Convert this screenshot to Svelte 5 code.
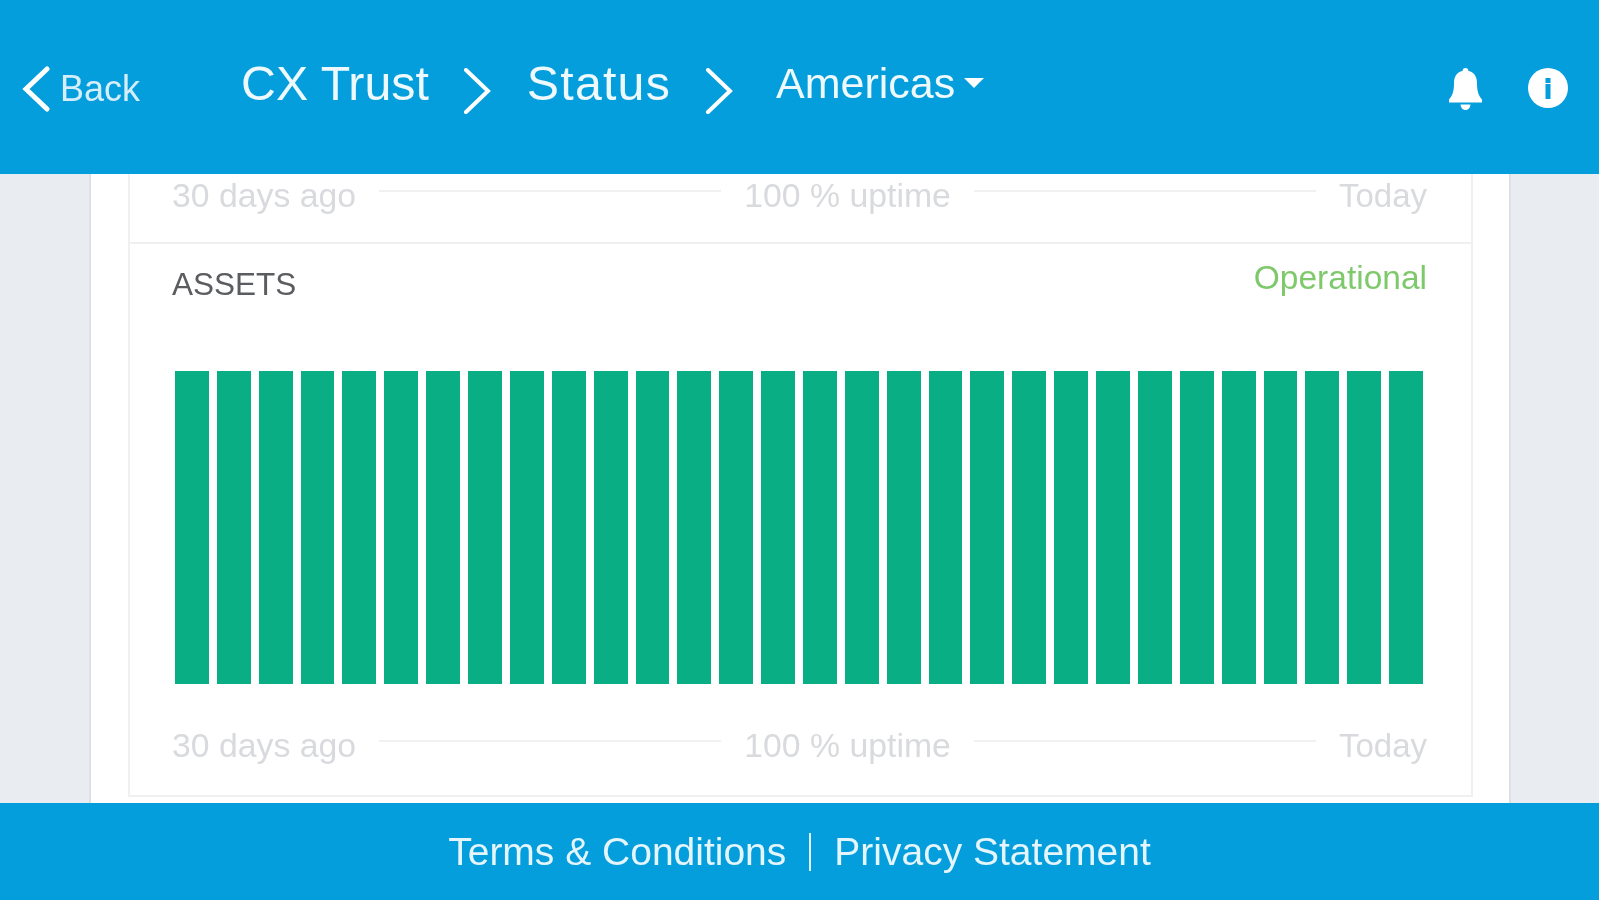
<script>
    const bars = Array.from({ length: 30 }, (_, i) => i)
</script>

<div class="page">
    <header class="top">
        <a class="back">
            <svg class="chev-back" viewBox="0 0 28 46"><path d="M25 3 L4 23 L25 43" /></svg>
            <span>Back</span>
        </a>
        <span class="crumb">CX Trust</span>
        <svg class="chev" viewBox="0 0 28 46"><path d="M3 2 L25 23 L3 44" /></svg>
        <span class="crumb status">Status</span>
        <svg class="chev" viewBox="0 0 28 46"><path d="M3 2 L25 23 L3 44" /></svg>
        <span class="region">Americas</span>
        <span class="caret"></span>
        <div class="icons">
            <svg class="bell" viewBox="0 0 33 42">
                <path d="M16.5 0 C18.4 0 19.4 1.2 19.4 3 C25.6 4.2 28 9 28 15 C28 22 29 27 33 31.5 L33 34.5 L0 34.5 L0 31.5 C4 27 5 22 5 15 C5 9 7.4 4.2 13.6 3 C13.6 1.2 14.6 0 16.5 0 Z" />
                <path d="M11.5 36.5 L21.5 36.5 C21.2 39.8 19.2 42 16.5 42 C13.8 42 11.8 39.8 11.5 36.5 Z" />
            </svg>
            <svg class="info" viewBox="0 0 40 40">
                <circle cx="20" cy="20" r="20" fill="#fff" />
                <rect x="17.5" y="10" width="5" height="5" fill="#039edb" />
                <rect x="17.5" y="16" width="5" height="15" fill="#039edb" />
            </svg>
        </div>
    </header>

    <main class="content">
        <div class="panel">
            <section class="card cut">
                <div class="uptime">
                    <span>30 days ago</span>
                    <i></i>
                    <span>100 % uptime</span>
                    <i></i>
                    <span class="today">Today</span>
                </div>
            </section>
            <section class="card">
                <div class="title-row">
                    <span class="name">ASSETS</span>
                    <span class="state">Operational</span>
                </div>
                <div class="bars">
                    {#each bars as b}
                        <div class="bar"></div>
                    {/each}
                </div>
                <div class="uptime">
                    <span>30 days ago</span>
                    <i></i>
                    <span>100 % uptime</span>
                    <i></i>
                    <span class="today">Today</span>
                </div>
            </section>
        </div>
    </main>

    <footer class="bottom">
        <span>Terms &amp; Conditions</span>
        <b></b>
        <span>Privacy Statement</span>
    </footer>
</div>

<style>
    :global(body) {
        margin: 0;
        overflow: hidden;
    }

    /* the reference is an upscaled, soft picture */
    .page {
        display: flex;
        flex-direction: column;
        height: 900px;
        font-family: "Liberation Sans", Arial, sans-serif;
        background: #e9ecf0;
        filter: blur(0.6px);
    }

    .top {
        display: flex;
        align-items: center;
        flex: 0 0 174px;
        box-sizing: border-box;
        padding: 0 31px 4px 22px;
        background: #039edb;
        color: #fff;
    }

    .back {
        display: flex;
        align-items: center;
        gap: 10px;
        width: 219px;
    }

    .back span {
        font-size: 36px;
        line-height: 40px;
        margin-top: 8px;
        color: #d5eefa;
    }

    svg path {
        fill: none;
    }

    .chev-back {
        width: 28px;
        height: 46px;
        margin-top: 8px;
    }

    .chev {
        width: 28px;
        height: 46px;
        margin: 12px 36px 0 34px;
    }

    .chev path,
    .chev-back path {
        stroke: #fff;
        stroke-width: 4;
        stroke-linecap: round;
    }

    .chev-back path {
        stroke-width: 5;
    }

    .crumb {
        font-size: 48.3px;
        line-height: 54px;
        margin-bottom: 4px;
        color: #eef9fe;
    }

    .status {
        letter-spacing: 1.2px;
    }

    .region {
        font-size: 43px;
        line-height: 50px;
        margin: 0 0 4px 7px;
        color: #eef9fe;
    }

    .caret {
        width: 0;
        height: 0;
        margin: 0 0 4px 9px;
        border-left: 10px solid transparent;
        border-right: 10px solid transparent;
        border-top: 10px solid #fff;
    }

    .icons {
        display: flex;
        align-items: flex-start;
        gap: 46px;
        margin: 8px 0 0 auto;
    }

    .bell {
        width: 33px;
        height: 42px;
    }

    .bell path {
        fill: #fff;
    }

    .info {
        width: 40px;
        height: 40px;
    }

    .content {
        flex: 1;
        min-height: 0;
        padding: 0 88px 0 89px;
    }

    .panel {
        box-sizing: border-box;
        height: 100%;
        padding: 0 36px 7px 37px;
        background: #fff;
        border-left: 2px solid #dcdfe3;
        border-right: 2px solid #dcdfe3;
    }

    .card {
        box-sizing: border-box;
        padding: 16px 44px 30px 42px;
        border: 2px solid #eff0f2;
        border-top: none;
    }

    .card.cut {
        height: 70px;
        padding-top: 2px;
    }

    .title-row {
        display: flex;
        justify-content: space-between;
        align-items: flex-start;
        height: 111px;
    }

    .name {
        margin-top: 6px;
        font-size: 31.5px;
        line-height: 36px;
        color: #5a5c5f;
    }

    .state {
        font-size: 33.5px;
        line-height: 36px;
        color: #7fc96d;
    }

    .bars {
        display: grid;
        grid-template-columns: repeat(30, 1fr);
        column-gap: 8px;
        height: 313px;
        margin: 0 4px 0 3px;
    }

    .bar {
        background: #0aae85;
    }

    .uptime {
        display: flex;
        align-items: center;
        gap: 23px;
        margin-top: 42px;
        font-size: 33.8px;
        line-height: 39px;
        color: #d8dadd;
    }

    .card.cut .uptime {
        margin-top: 0;
    }

    .uptime i {
        flex: 1;
        height: 2px;
        margin-bottom: 10px;
        background: #f0f1f3;
    }

    .uptime .today {
        font-size: 33px;
    }

    .bottom {
        display: flex;
        align-items: center;
        justify-content: center;
        flex: 0 0 97px;
        gap: 23px;
        box-sizing: border-box;
        background: #039edb;
        color: #e4f5fd;
        font-size: 39px;
    }

    .bottom b {
        width: 2px;
        height: 38px;
        background: #e4f5fd;
    }
</style>
